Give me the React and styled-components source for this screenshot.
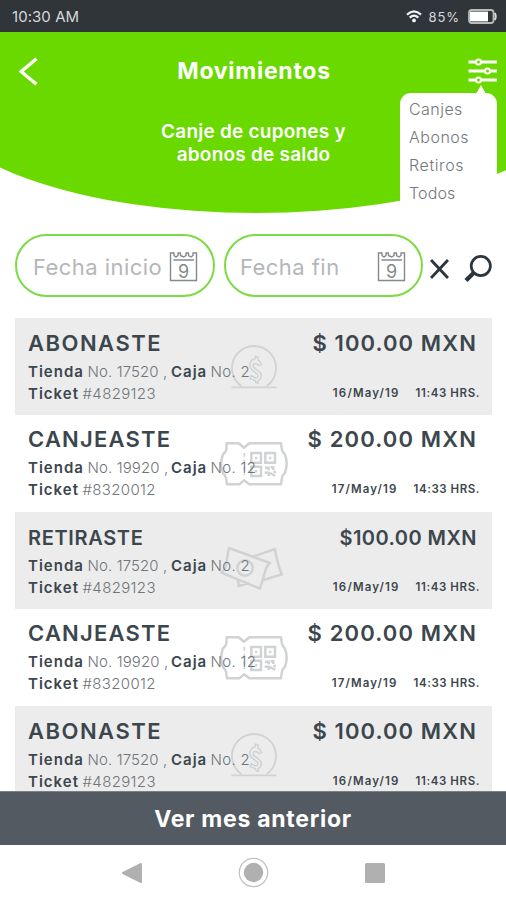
import React from "react";
import styled, { createGlobalStyle } from "styled-components";

const GlobalStyle = createGlobalStyle`
  * { box-sizing: border-box; }
  body { margin: 0; background: #fff; }
`;

const GREEN = "#6ad900";
const INK = "#3c464d";

const Screen = styled.div`
  width: 506px;
  height: 900px;
  display: flex;
  flex-direction: column;
  overflow: hidden;
  background: #fff;
  color: ${INK};
  font-family: Inter, "Open Sans", sans-serif;
`;

const StatusBar = styled.div`
  height: 32px;
  flex: none;
  display: flex;
  align-items: center;
  padding: 1px 9px 0 12px;
  background: #30353a;
  color: #d6d8da;
`;

const StatusText = styled.span`
  flex: ${(p) => (p.$grow ? 1 : "none")};
  font-size: ${(p) => (p.$grow ? 15 : 13)}px;
  letter-spacing: ${(p) => (p.$grow ? 0.05 : 0.9)}px;
  font-weight: 400;
  margin: ${(p) => (p.$grow ? 0 : "0 8px 0 7px")};
  line-height: 32px;
`;

const Header = styled.header`
  position: relative;
  height: 181px;
  flex: none;
  color: #fff;
`;

const Curve = styled.div`
  position: absolute;
  inset: 0;
  overflow: hidden;
  &::before {
    content: "";
    position: absolute;
    top: 0;
    bottom: 0;
    left: -64px;
    width: 640px;
    background: ${GREEN};
    border-radius: 0 0 320px 320px / 0 0 114px 114px;
  }
`;

const TitleBar = styled.div`
  position: relative;
  display: flex;
  align-items: center;
  justify-content: space-between;
  height: 78px;
  padding: 0 9px 0 18px;
`;

const Title = styled.h1`
  margin: 0 0 0 2px;
  font-size: 23px;
  font-weight: 700;
  letter-spacing: 0.72px;
`;

const Subtitle = styled.p`
  position: relative;
  display: flex;
  flex-direction: column;
  align-items: center;
  margin: 10px 0 0;
  padding-left: 1px;
  font-size: 19px;
  line-height: 23px;
  font-weight: 600;
  letter-spacing: 0.22px;
`;

const Menu = styled.ul`
  position: absolute;
  top: 61px;
  left: 400px;
  width: 97px;
  height: 120px;
  margin: 0;
  padding: 2px 0 0 9px;
  list-style: none;
  background: #fff;
  border-radius: 11px 11px 0 0;
  color: #74787c;
  font-size: 16px;
  line-height: 28px;
  font-weight: 300;
  &::before {
    content: "";
    position: absolute;
    top: -8px;
    left: 76px;
    border: solid transparent;
    border-width: 0 5px 9px;
    border-bottom-color: #fff;
  }
`;

const MenuItem = styled.li`
  letter-spacing: ${(p) => p.$track}px;
`;

const Filters = styled.div`
  flex: none;
  display: flex;
  align-items: center;
  height: 63px;
  margin: 21px 0 21px 15px;
`;

const DateField = styled.div`
  width: 200px;
  height: 63px;
  margin-right: 9px;
  padding: 3px 15px 0 16px;
  display: flex;
  align-items: center;
  justify-content: space-between;
  border: 2px solid #7ddb45;
  border-radius: 32px;
  color: #b4b6b8;
  font-size: 22px;
  letter-spacing: 0.45px;
  white-space: nowrap;
  & + & { width: 199px; margin-right: 8px; padding-left: 14px; padding-right: 15px; }
`;

const IconSlot = styled.span`
  display: flex;
  margin: ${(p) => p.$space || 0};
`;

const List = styled.main`
  flex: 1;
  min-height: 0;
  overflow: hidden;
  padding: 0 14px 0 15px;
`;

const Item = styled.article`
  position: relative;
  height: 97px;
  display: flex;
  justify-content: space-between;
  padding: ${(p) => (p.$shaded ? 12 : 11)}px 13px 0 13px;
  background: ${(p) => (p.$shaded ? "#ececec" : "#fff")};
`;

const Watermark = styled.svg`
  position: absolute;
  left: 195px;
  top: ${(p) => p.$top}px;
  width: 90px;
  height: 70px;
  fill: none;
  stroke: #d0d2d4;
  stroke-width: 7.5;
`;

const Column = styled.div`
  position: relative;
  display: flex;
  flex-direction: column;
  white-space: nowrap;
  align-items: ${(p) => (p.$end ? "flex-end" : "flex-start")};
`;

const Heading = styled.h2`
  margin: 0;
  height: 31px;
  line-height: ${(p) => (p.$small ? 28 : 26)}px;
  font-size: ${(p) => (p.$small ? 20 : 22)}px;
  font-weight: 600;
  letter-spacing: ${(p) => p.$track}px;
  padding-right: ${(p) => (p.$amount ? 2 : 0)}px;
`;

const Detail = styled.p`
  margin: 0;
  display: flex;
  font-size: 15px;
  line-height: 22px;
  font-weight: 300;
  color: #70757a;
`;

const Label = styled.b`
  width: ${(p) => p.$w}px;
  font-weight: 600;
  letter-spacing: 1px;
  color: ${INK};
`;

const Value = styled.span`
  width: ${(p) => (p.$w ? `${p.$w}px` : "auto")};
  letter-spacing: ${(p) => p.$track}px;
`;

const Stamp = styled.div`
  display: flex;
  gap: 16px;
  margin: 21px -1px 0 0;
  font-size: 11.5px;
  line-height: 22px;
  font-weight: 600;
`;

const StampPart = styled.span`
  letter-spacing: ${(p) => p.$track}px;
`;

const PreviousButton = styled.button`
  flex: none;
  height: 54px;
  border: 0;
  border-top: 1px solid #7b8086;
  padding: 0;
  background: #535a62;
  color: #fff;
  font-family: inherit;
  font-size: 23px;
  font-weight: 700;
  letter-spacing: 0.72px;
`;

const NavBar = styled.nav`
  flex: none;
  height: 55px;
  display: flex;
  align-items: center;
  justify-content: space-between;
  padding: 2px 121px;
`;

const Calendar = () => (
  <svg width="29" height="30" viewBox="0 0 29 30" fill="none" stroke="#85898d" strokeWidth="1.4">
    <path d="M5 1H1.5V28.5H27.5V1H24M9 1h2.5M17 1h2.5M4.5 8H25" />
    <path d="M5 .5V3.5l2 1.5 2-1.5V.5M11.5.5V3.5l3 1.5 2.5-1.5V.5M19.5.5V3.5l2.5 1.5 2-1.5V.5" />
    <text x="14.5" y="25.5" textAnchor="middle" fontSize="18" fontWeight="400" letterSpacing="0" fill="#85898d" stroke="none">9</text>
  </svg>
);

const CoinMark = () => (
  <Watermark viewBox="0 0 270 210" $top={12}>
    <path d="M64 172H200M94 168A66 66 0 1 1 170 168" strokeWidth="5.5" />
    <path
      strokeWidth="4.5"
      strokeLinejoin="round"
      d="M126 90L136 86V78L144 82V90Q152 95 155 104L147 107Q141 98 133 101Q127 106 132 113L149 126Q158 136 151 147L145 152V160L137 157V153L120 145L123 137L137 144Q147 142 143 133L124 118Q114 104 126 90Z"
    />
  </Watermark>
);

const CouponMark = () => (
  <Watermark viewBox="0 0 270 210" $top={15}>
    <path strokeLinejoin="round" d="M50 40H86L102 53L118 40H213L216 60Q219 68 225 74Q235 101 225 128Q217 136 216 143L213 163H118L102 151L88 163H51L48 143Q45 135 39 129Q28 101 39 73Q48 66 49 58Z" />
    <path d="M103 68V136" strokeDasharray="12 9" strokeWidth="5" />
    <path d="M124 69H153V98H124ZM166 69H195V98H166ZM124 110H153V138H124Z" />
    <path d="M135 84H142M177 84H184M135 124H142M165 113H176V121M182 112H190V120M164 128H176V138M180 129L196 138M190 126H198" />
  </Watermark>
);

const BillsMark = () => (
  <Watermark viewBox="0 0 270 210" $top={18}>
    <path strokeLinejoin="round" d="M57 54L180 99Q172 104 168 116L150 176L34 128Q44 121 47 108ZM128 80L195 57Q197 73 201 88Q206 111 215 133L161 150M82 149Q87 158 85 168L117 159" />
    <circle cx="105" cy="114" r="23" />
  </Watermark>
);

const MARKS = { coin: CoinMark, coupon: CouponMark, bills: BillsMark };

const DEPOSIT = {
  title: "ABONASTE", titleTrack: 1.5, amount: "$ 100.00 MXN", amountTrack: 1.1, shaded: true,
  store: "17520", box: "2", ticket: "#4829123", date: "16/May/19", time: "11:43 HRS.", timeTrack: 0.6, mark: "coin",
};
const REDEEM = {
  title: "CANJEASTE", titleTrack: 1.22, amount: "$ 200.00 MXN", amountTrack: 1.14, shaded: false,
  store: "19920", box: "12", ticket: "#8320012", date: "17/May/19", time: "14:33 HRS.", timeTrack: 0.55, mark: "coupon",
};
const WITHDRAW = { ...DEPOSIT, title: "RETIRASTE", titleTrack: 0.65, amount: "$100.00 MXN", amountTrack: 0.45, small: true, mark: "bills" };
const MOVEMENTS = [DEPOSIT, REDEEM, WITHDRAW, REDEEM, DEPOSIT];

const Movement = ({ m }) => {
  const Mark = MARKS[m.mark];
  return (
    <Item $shaded={m.shaded}>
      <Mark />
      <Column>
        <Heading $small={m.small} $track={m.titleTrack}>{m.title}</Heading>
        <Detail>
          <Label $w={59.5}>Tienda</Label>
          <Value $w={83.5} $track={0.1}>No. {m.store} ,</Value>
          <Label $w={39.5}>Caja</Label>
          <Value $track={0.3}>No. {m.box}</Value>
        </Detail>
        <Detail>
          <Label $w={54.5}>Ticket</Label>
          <Value $track={0.35}>{m.ticket}</Value>
        </Detail>
      </Column>
      <Column $end>
        <Heading $amount $small={m.small} $track={m.amountTrack}>{m.amount}</Heading>
        <Stamp>
          <StampPart $track={1.15}>{m.date}</StampPart>
          <StampPart $track={m.timeTrack}>{m.time}</StampPart>
        </Stamp>
      </Column>
    </Item>
  );
};

export default function App() {
  return (
    <Screen>
      <GlobalStyle />
      <StatusBar>
        <StatusText $grow>10:30 AM</StatusText>
        <svg width="16" height="13" viewBox="0 0 16 13" fill="none" stroke="#f2f3f4" strokeWidth="2.2">
          <path d="M1 4.6Q8-1.8 15 4.6M3.7 7.6Q8 3.6 12.3 7.6" />
          <circle cx="8" cy="10.4" r="1.9" fill="#f2f3f4" stroke="none" />
        </svg>
        <StatusText>85%</StatusText>
        <svg width="29" height="15" viewBox="0 0 29 15">
          <rect x="1" y="1" width="24.5" height="13" rx="2.5" fill="none" stroke="#b9bcbe" strokeWidth="1.8" />
          <path d="M26.8 4Q28.6 7.5 26.8 11" fill="none" stroke="#d6d8da" strokeWidth="2" />
          <rect x="2" y="2.6" width="18" height="9.8" fill="#fff" />
        </svg>
      </StatusBar>

      <Header>
        <Curve />
        <TitleBar>
          <svg width="20" height="29" viewBox="0 0 20 29" fill="none" stroke="#fff" strokeWidth="3.4">
            <path d="M18.5 1.8L3.2 14.5L18.5 27.2" />
          </svg>
          <Title>Movimientos</Title>
          <svg width="29" height="26" viewBox="0 0 29 26" fill={GREEN} stroke="#fff" strokeWidth="2">
            <path d="M.5 4H29M.5 13H29M.5 22H29" strokeWidth="2.8" />
            <circle cx="10.5" cy="4" r="2.5" />
            <circle cx="19.5" cy="13" r="2.5" />
            <circle cx="10.5" cy="22" r="2.5" />
          </svg>
        </TitleBar>
        <Subtitle>
          <span>Canje de cupones y</span>
          <span>abonos de saldo</span>
        </Subtitle>
        <Menu>
          <MenuItem $track={0.45}>Canjes</MenuItem>
          <MenuItem $track={0.5}>Abonos</MenuItem>
          <MenuItem $track={0.6}>Retiros</MenuItem>
          <MenuItem $track={0.15}>Todos</MenuItem>
        </Menu>
      </Header>

      <Filters>
        <DateField>Fecha inicio<Calendar /></DateField>
        <DateField>Fecha fin<Calendar /></DateField>
        <IconSlot $space="7px 16px 0 -1px">
          <svg width="19" height="20" viewBox="0 0 19 20" stroke="#2d363e" strokeWidth="2.9">
            <path d="M1 1L18 19M18 1L1 19" />
          </svg>
        </IconSlot>
        <IconSlot $space="7px 0 0 -1px">
          <svg width="28" height="28" viewBox="0 0 28 28" fill="none" stroke="#2d363e">
            <circle cx="16.8" cy="11" r="9.6" strokeWidth="2.7" />
            <path d="M9.8 17.8L2 25.5" strokeWidth="4.4" />
          </svg>
        </IconSlot>
      </Filters>

      <List>
        {MOVEMENTS.map((m, i) => <Movement key={i} m={m} />)}
      </List>

      <PreviousButton>Ver mes anterior</PreviousButton>
      <NavBar>
        <svg width="21" height="22" viewBox="0 0 21 22" fill="#b0b0b0" stroke="#b0b0b0" strokeWidth="2" strokeLinejoin="round">
          <path d="M2 11L20 2V20Z" />
        </svg>
        <svg width="31" height="31" viewBox="0 0 31 31">
          <circle cx="15.5" cy="15.5" r="14.2" fill="none" stroke="#c0c0c0" strokeWidth="1.2" />
          <circle cx="15.5" cy="15.5" r="9.7" fill="#b0b0b0" />
        </svg>
        <svg width="20" height="20" viewBox="0 0 20 20">
          <rect width="20" height="20" rx="1.5" fill="#b0b0b0" />
        </svg>
      </NavBar>
    </Screen>
  );
}
